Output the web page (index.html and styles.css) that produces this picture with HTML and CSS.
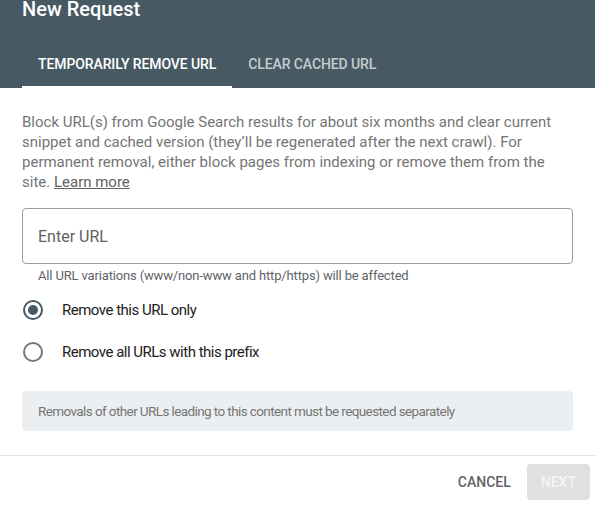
FILE: index.html
```html
<!DOCTYPE html>
<html lang="en">
<head>
<meta charset="utf-8">
<title>New Request</title>
<link rel="stylesheet" href="styles.css">
</head>
<body>
<div class="dialog">
  <header class="dialog-header">
    <h1 class="dialog-title">New Request</h1>
    <nav class="tabs">
      <div class="tab tab-active">Temporarily remove URL</div>
      <div class="tab">Clear cached URL</div>
    </nav>
  </header>
  <main class="dialog-body">
    <p class="intro">Block URL(s) from Google Search results for about six months and clear current snippet and cached version (they’ll be regenerated after the next crawl). For permanent removal, either block pages from indexing or remove them from the site. <a class="link" href="#">Learn more</a></p>
    <div class="field">
      <span class="placeholder">Enter URL</span>
    </div>
    <div class="helper">All URL variations (www/non-www and http/https) will be affected</div>
    <div class="radios">
      <label class="radio-row">
        <span class="radio radio-checked"><span class="radio-dot"></span></span>
        <span class="radio-label">Remove this URL only</span>
      </label>
      <label class="radio-row">
        <span class="radio"></span>
        <span class="radio-label">Remove all URLs with this prefix</span>
      </label>
    </div>
    <div class="notice">Removals of other URLs leading to this content must be requested separately</div>
  </main>
  <footer class="dialog-footer">
    <button class="btn btn-text" type="button">Cancel</button>
    <button class="btn btn-disabled" type="button">Next</button>
  </footer>
</div>
</body>
</html>
```
FILE: styles.css
```css
html, body {
  margin: 0;
  padding: 0;
  background: #ffffff;
}
body {
  font-family: Roboto, "Liberation Sans", Arial, sans-serif;
  width: 595px;
  height: 506px;
  overflow: hidden;
}
.dialog {
  display: flex;
  flex-direction: column;
}
.dialog-header {
  background: #475a64;
  padding: 0 0 0 22px;
  display: flex;
  flex-direction: column;
}
.dialog-title {
  margin: 0;
  font-size: 20px;
  font-weight: 500;
  line-height: 18px;
  color: #ffffff;
  height: 18px;
}
.tabs {
  display: flex;
  margin-top: 22px;
  height: 48px;
}
.tab {
  box-sizing: border-box;
  height: 48px;
  padding: 2px 16px 0 16px;
  display: flex;
  align-items: center;
  font-size: 14px;
  font-weight: 500;
  text-transform: uppercase;
  letter-spacing: -0.1px;
  color: rgba(255, 255, 255, 0.7);
  border-bottom: 2px solid transparent;
}
.tab-active {
  color: #ffffff;
  border-bottom-color: #ffffff;
}
.dialog-body {
  padding: 24px 22px 0 22px;
  display: flex;
  flex-direction: column;
}
.intro {
  margin: 0;
  font-size: 15px;
  line-height: 20px;
  color: #757575;
}
.link {
  color: #616161;
  text-decoration: underline;
}
.field {
  box-sizing: border-box;
  margin-top: 16px;
  height: 56px;
  border: 1px solid #9e9e9e;
  border-radius: 4px;
  padding: 0 15px;
  display: flex;
  align-items: center;
}
.placeholder {
  font-size: 16px;
  color: #616161;
}
.helper {
  margin-top: 4px;
  padding-left: 16px;
  font-size: 13px;
  letter-spacing: -0.15px;
  line-height: 16px;
  color: #5f6368;
}
.radios {
  margin-top: 5px;
  display: flex;
  flex-direction: column;
}
.radio-row {
  height: 42px;
  display: flex;
  align-items: center;
}
.radio {
  box-sizing: border-box;
  width: 20px;
  height: 20px;
  margin-left: 1px;
  border: 2px solid #757575;
  border-radius: 50%;
  display: flex;
  align-items: center;
  justify-content: center;
}
.radio-checked {
  border-color: #455a64;
}
.radio-dot {
  width: 10px;
  height: 10px;
  border-radius: 50%;
  background: #455a64;
}
.radio-label {
  margin-left: 19px;
  font-size: 15px;
  letter-spacing: -0.5px;
  color: #212121;
}
.notice {
  margin-top: 18px;
  height: 40px;
  box-sizing: border-box;
  padding: 0 16px;
  display: flex;
  align-items: center;
  background: #eceff1;
  border-radius: 4px;
  font-size: 13.5px;
  letter-spacing: -0.6px;
  color: #757575;
}
.dialog-footer {
  margin-top: 24px;
  border-top: 1px solid #e0e0e0;
  padding: 8px 5px 0 0;
  display: flex;
  justify-content: flex-end;
}
.btn {
  font-family: inherit;
  height: 36px;
  border: none;
  border-radius: 4px;
  padding: 0 16px;
  font-size: 14px;
  font-weight: 500;
  text-transform: uppercase;
  background: transparent;
}
.btn-text {
  color: #5f6368;
}
.btn-disabled {
  padding: 0 14px;
  background: #e0e0e0;
  color: #f5f5f5;
}
```
